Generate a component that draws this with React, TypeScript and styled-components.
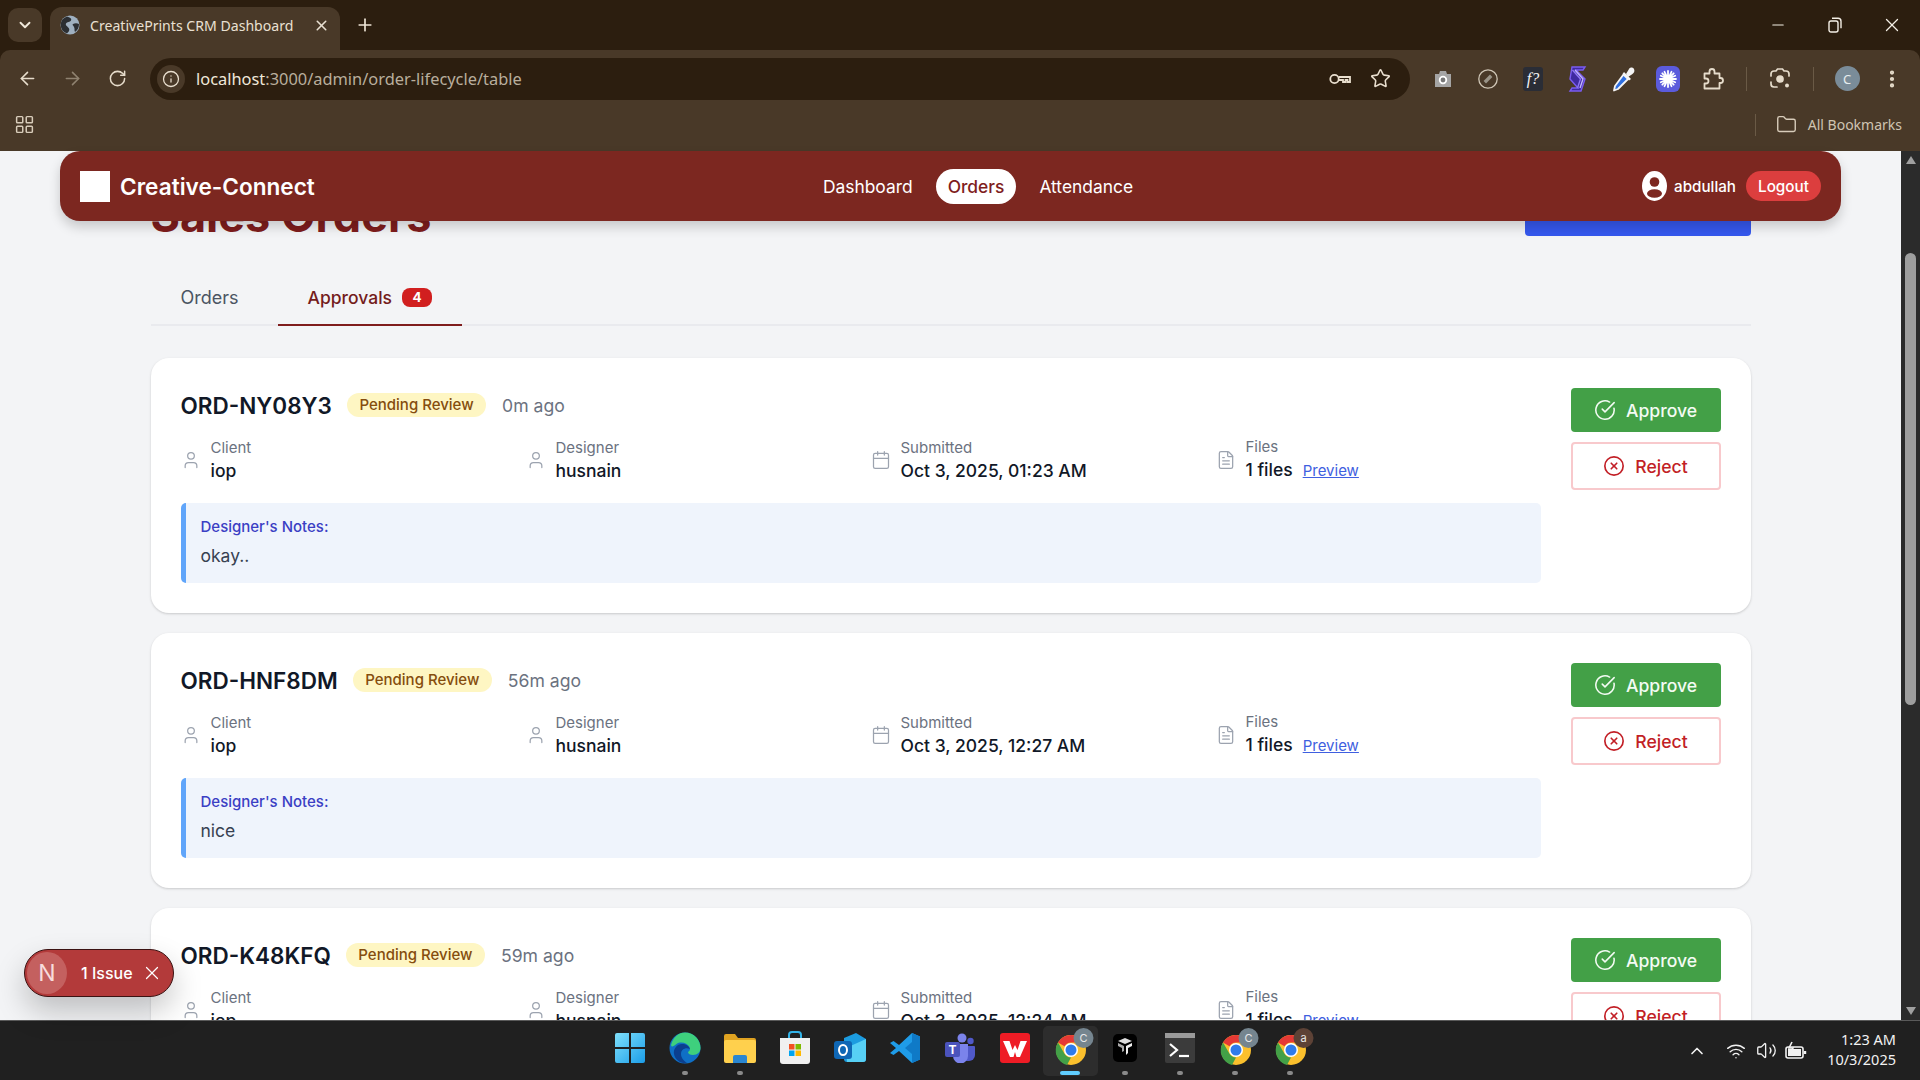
import React from "react";
import styled, { createGlobalStyle } from "styled-components";
import {
  ArrowLeft, ArrowRight, Calendar, ChevronDown, ChevronUp, CircleCheckBig, CircleX, EllipsisVertical,
  FileText, Folder, Info, LayoutGrid, Minus, Plus, RotateCw, Star, User, Volume2, Wifi, X,
} from "lucide-react";

const GlobalStyle = createGlobalStyle`
  html, body { margin: 0; padding: 0; overflow: hidden; background: #202020; }
  * { box-sizing: border-box; }
`;

const Screen = styled.div`
  width: 1920px; height: 1080px; display: flex; flex-direction: column; overflow: hidden;
  font-family: Inter, "Liberation Sans", sans-serif;
`;

/* ---------- browser chrome ---------- */
const BrowserFrame = styled.div`
  height: 151px; flex: none; background: #2c1e0f; display: flex; flex-direction: column;
  font-family: "Noto Sans", "Open Sans", sans-serif; color: #e9dfcf;
`;
const TabStrip = styled.div` height: 50px; display: flex; align-items: flex-end; flex: none; `;
const TabSwitcher = styled.div`
  width: 34px; height: 34px; margin: 0 8px 8px 8px; border-radius: 10px; background: #493928;
  display: flex; align-items: center; justify-content: center; color: #f0e8da;
`;
const ActiveTab = styled.div`
  width: 290px; height: 43px; background: #493928; border-radius: 12px 12px 0 0; display: flex; align-items: center;
  padding: 0 10px 7px; gap: 10px; font-size: 14.1px; color: #e9e0d2;
`;
const TabTitle = styled.span` flex: 1; white-space: nowrap; `;
const NewTab = styled.div` width: 50px; height: 50px; display: flex; align-items: center; justify-content: center; color: #eee5d6; `;
const WindowControls = styled.div` margin-left: auto; display: flex; align-self: stretch; `;
const WindowButton = styled.div` width: 57px; display: flex; align-items: center; justify-content: center; color: #f4efe6; `;
const ToolbarArea = styled.div` flex: 1; background: #493928; border-radius: 10px 10px 0 0; display: flex; flex-direction: column; `;
const Toolbar = styled.div` height: 50px; display: flex; align-items: center; padding: 7px 0 0 4.5px; `;
const Slot = styled.div<{ $dim?: boolean }>`
  width: 45px; height: 42px; flex: none; display: flex; align-items: center; justify-content: center;
  color: ${(p) => (p.$dim ? "#8f8270" : "#e6dccb")};
`;
const AddressBar = styled.div`
  width: 1260px; height: 42px; margin: 0 10.5px; flex: none; border-radius: 21px; background: #2c1e0f; display: flex; align-items: center; padding: 0 10px 0 7px;
`;
const InfoChip = styled.div`
  width: 28px; height: 28px; flex: none; border-radius: 50%; background: #493928; display: flex; align-items: center; justify-content: center; color: #e9dfcf;
`;
const Url = styled.div` margin-left: 11px; font-size: 16.4px; color: #b9ae9d; white-space: nowrap; flex: 1; `;
const UrlHost = styled.span` color: #f0e8da; `;
const UrlAction = styled.div` width: 40px; display: flex; align-items: center; justify-content: center; color: #e9dfcf; `;
const ToolDivider = styled.div` width: 1px; height: 24px; margin: 0 10.5px; background: #6a5a46; flex: none; `;
const Avatar = styled.div`
  width: 25px; height: 25px; border-radius: 50%; background: #7a8c99; color: #e6ecef; font-size: 13px; display: flex; align-items: center; justify-content: center;
`;
const FBadge = styled.div`
  width: 20px; height: 24px; border-radius: 3px; background: #2a2d36; color: #f4f4f4; font: italic 400 16px "Liberation Serif", serif; display: flex; align-items: center; justify-content: center;
`;
const BookmarksBar = styled.div` height: 51px; margin-top: -1px; display: flex; align-items: center; padding: 0 18px 0 14px; color: #d8ccba; `;
const BookmarkDivider = styled.div` width: 1px; height: 22px; background: #6a5a46; margin-left: auto; margin-right: 20px; `;
const BookmarkLabel = styled.span` margin-left: 11px; font-size: 14px; color: #cfc4b2; white-space: nowrap; `;

/* ---------- page ---------- */
const Viewport = styled.div` flex: 1; min-height: 0; display: flex; position: relative; background: #f3f4f6; `;
const PageArea = styled.main` flex: 1; min-width: 0; overflow: hidden; padding: 37px 150.5px 0; `;
const TitleRow = styled.div` height: 48px; display: flex; justify-content: space-between; align-items: flex-start; margin-bottom: 30px; `;
const PageTitle = styled.h1` margin: 0; font-size: 45px; line-height: 56px; font-weight: 700; color: #7f1d1d; white-space: nowrap; `;
const NewOrderButton = styled.div` width: 226px; height: 48px; border-radius: 4px; background: #3558ee; `;
const Tabs = styled.div` display: flex; gap: 9px; height: 60px; border-bottom: 2px solid #e9eaee; margin-bottom: 32px; `;
const TabItem = styled.div<{ $active?: boolean }>`
  height: 60px; padding: 19px 30px 0; line-height: 26px; display: flex; align-items: flex-start; gap: 10px; white-space: nowrap;
  font-size: ${(p) => (p.$active ? "17.5px" : "18px")};
  color: ${(p) => (p.$active ? "#741c1c" : "#4b5563")};
  font-weight: ${(p) => (p.$active ? 500 : 400)};
  border-bottom: 2px solid ${(p) => (p.$active ? "#7f1d1d" : "transparent")};
`;
const CountBadge = styled.span`
  width: 30px; height: 19px; margin-top: 3px; border-radius: 8px; background: #d11f1f; color: #fff; font-size: 13.5px; line-height: 19px; font-weight: 700; text-align: center;
`;
const CardList = styled.div` display: flex; flex-direction: column; gap: 20px; `;
const Card = styled.article`
  display: flex; gap: 30px; padding: 30px; background: #fff; border-radius: 18px; flex: none;
  box-shadow: 0 1px 3px rgba(0, 0, 0, 0.12), 0 1px 2px rgba(0, 0, 0, 0.06);
`;
const CardBody = styled.div` flex: 1; min-width: 0; `;
const CardHead = styled.div` height: 34px; display: flex; align-items: center; `;
const OrderId = styled.span` font-size: 22.5px; font-weight: 600; color: #111827; white-space: nowrap; `;
const StatusBadge = styled.span`
  margin-left: 15px; height: 24px; padding: 0 12.5px; border-radius: 12px; background: #fef6c3; color: #854d0e; font-size: 15px; font-weight: 500; line-height: 24px; white-space: nowrap;
`;
const TimeAgo = styled.span` margin-left: 16px; font-size: 17.6px; color: #6b7280; white-space: nowrap; `;
const InfoGrid = styled.div` display: grid; grid-template-columns: repeat(4, 345px); margin-top: 14px; `;
const InfoItem = styled.div` display: flex; align-items: center; gap: 10px; color: #9ca3af; `;
const InfoText = styled.div` display: flex; flex-direction: column; `;
const InfoLabel = styled.span` font-size: 15px; line-height: 22px; color: #6b7280; `;
const InfoValue = styled.span` font-size: 17.5px; line-height: 24px; font-weight: 500; color: #111827; white-space: nowrap; `;
const PreviewLink = styled.a` margin-left: 10px; font-size: 15px; font-weight: 400; color: #3f5fe0; text-decoration: underline; `;
const Notes = styled.div`
  margin-top: 20px; height: 80px; padding: 14px 20px 0 15px; background: #eff4fc; border-left: 5px solid #60a5fa; border-radius: 5px;
`;
const NotesTitle = styled.div` font-size: 15px; line-height: 20px; font-weight: 500; color: #3b3fc4; `;
const NotesText = styled.div` margin-top: 5px; font-size: 17.5px; line-height: 28px; color: #374151; `;
const Actions = styled.div` width: 150px; flex: none; display: flex; flex-direction: column; gap: 10px; `;
const ActionButton = styled.button<{ $reject?: boolean }>`
  height: ${(p) => (p.$reject ? "48px" : "44px")}; border-radius: 4px; display: flex; align-items: center; justify-content: center; gap: 10px;
  font: 500 17.6px Inter, sans-serif; cursor: pointer; padding: 0;
  color: ${(p) => (p.$reject ? "#c21f26" : "#f3fbf3")};
  background: ${(p) => (p.$reject ? "#fff" : "#43a047")};
  border: ${(p) => (p.$reject ? "2px solid #f8c9cc" : "none")};
`;

/* overlays */
const AppHeader = styled.header`
  position: absolute; top: 0; left: 60px; width: 1781px; height: 70px; padding: 0 20px; border-radius: 20px;
  background: #7c2720; color: #fff; display: grid; grid-template-columns: 1fr auto 1fr; align-items: center;
  box-shadow: 0 6px 12px rgba(0, 0, 0, 0.18);
`;
const Brand = styled.div` display: flex; align-items: center; gap: 10px; font-size: 22.6px; font-weight: 600; white-space: nowrap; `;
const BrandMark = styled.div` width: 30px; height: 31px; background: #fff; `;
const NavLinks = styled.nav` display: flex; align-items: center; gap: 11px; margin-left: 55px; `;
const NavLink = styled.a<{ $active?: boolean }>`
  height: 35px; padding: 0 12px; border-radius: 18px; display: flex; align-items: center; font-size: 17.4px; white-space: nowrap;
  font-weight: ${(p) => (p.$active ? 500 : 400)};
  color: ${(p) => (p.$active ? "#7f1d1d" : "#fff")};
  background: ${(p) => (p.$active ? "#fff" : "transparent")};
`;
const UserBox = styled.div` justify-self: end; display: flex; align-items: center; font-size: 15.2px; font-weight: 500; `;
const UserName = styled.span` margin: 0 10px 0 7px; `;
const LogoutButton = styled.div`
  width: 75px; height: 30px; border-radius: 15px; background: #dc3e3e; color: #fff; font-size: 15.3px; font-weight: 500; display: flex; align-items: center; justify-content: center;
`;
const IssueToast = styled.div`
  position: absolute; left: 24px; top: 798px; width: 150px; height: 48px; border-radius: 24px; background: #b33a3a; border: 1.5px solid #3b1212; color: #fff;
  display: flex; align-items: center; padding-left: 2px; font-size: 16px; font-weight: 500;
  box-shadow: 0 14px 30px rgba(0, 0, 0, 0.22);
`;
const IssueLogo = styled.div`
  width: 40px; height: 42px; border-radius: 50%; background: #c4605f; display: flex; align-items: center; justify-content: center; font-size: 23px; font-weight: 400; color: #f7dcdc;
`;
const IssueText = styled.span` margin: 0 8px 0 14px; white-space: nowrap; `;
const ScrollTrack = styled.div` width: 19px; flex: none; background: #2b2b2b; display: flex; flex-direction: column; align-items: center; justify-content: space-between; padding: 5px 0; position: relative; `;
const ScrollThumb = styled.div` position: absolute; top: 102px; left: 4px; width: 11px; height: 452px; border-radius: 6px; background: #9e9e9e; `;
const ScrollArrow = styled.div<{ $down?: boolean }>`
  width: 0; height: 0; border-left: 5.5px solid transparent; border-right: 5.5px solid transparent;
  ${(p) => (p.$down ? "border-top: 8px solid #a0a0a0;" : "border-bottom: 8px solid #a0a0a0;")}
`;

/* ---------- taskbar ---------- */
const Taskbar = styled.footer`
  height: 60px; flex: none; background: #202020; border-top: 1px solid #5a5a5a; display: grid; grid-template-columns: 1fr auto 1fr; align-items: center;
  font-family: "Noto Sans", "Open Sans", sans-serif; color: #f2f2f2;
`;
const TaskIcons = styled.div` grid-column: 2; display: flex; `;
const TaskSlot = styled.div<{ $active?: boolean }>`
  width: 55px; height: 50px; position: relative; display: flex; align-items: center; justify-content: center; border-radius: 5px; padding-bottom: 6px;
  background: ${(p) => (p.$active ? "#2d2d2d" : "transparent")};
`;
const TaskDot = styled.span<{ $active?: boolean }>`
  position: absolute; bottom: 1px; left: 50%; transform: translateX(-50%); height: 3.5px; border-radius: 2px;
  width: ${(p) => (p.$active ? "20px" : "6px")};
  background: ${(p) => (p.$active ? "#60cdff" : "#8a8a8a")};
`;
const Tray = styled.div` justify-self: end; display: flex; align-items: center; padding-right: 24px; `;
const TraySlot = styled.div` width: 30px; display: flex; justify-content: center; `;
const TrayChevron = styled.div` width: 24px; margin-right: 12px; display: flex; justify-content: center; `;
const Clock = styled.div` margin-left: 16px; padding-bottom: 4px; text-align: right; font-size: 14.5px; line-height: 20px; white-space: nowrap; `;

/* ---------- drawings ---------- */
const GlobeIcon = () => (
  <svg width="20" height="20" viewBox="0 0 20 20">
    <circle cx="10" cy="10" r="9.5" fill="#9fb0c0" />
    <path d="M7 1.5c3 1 5 2 4 4s-4 1-5 3 2 3 3 5-1 4-2 5C3 17 .8 14 .8 10 .8 6 3 3 7 1.5zM13 9c2-1 4-1 6 0 0 3-1 6-4 8-1-2 0-3-1-5s-2-2-1-3z" fill="#2c2f33" />
  </svg>
);
const KeyIcon = () => (
  <svg width="24" height="24" viewBox="0 0 24 24" fill="none" stroke="currentColor" strokeWidth="1.8">
    <circle cx="6.5" cy="12" r="4.2" />
    <path d="M10.7 10h11.3v5h-2.5v-2h-2v2h-2.5v-2h-4.3" />
  </svg>
);
const RestoreIcon = () => (
  <svg width="14" height="16" viewBox="0 0 14 16" fill="none" stroke="currentColor" strokeWidth="1.4">
    <rect x="1" y="4" width="9" height="11" rx="2" />
    <path d="M4 1.2h6a3 3 0 0 1 3 3v7" />
  </svg>
);
const CameraExt = () => (
  <svg width="20" height="20" viewBox="0 0 20 20">
    <path d="M2 5h4l1-3h6l1 3h4v13H2z" fill="#a5a5a5" />
    <circle cx="10" cy="11" r="4.2" fill="#fff" />
    <circle cx="10" cy="11" r="2.4" fill="#777" />
  </svg>
);
const CompassExt = () => (
  <svg width="22" height="22" viewBox="0 0 22 22" fill="none">
    <circle cx="11" cy="11" r="9.2" stroke="#cfc6b6" strokeWidth="1.3" />
    <path d="M7.8 14.2l6.4-6.4" stroke="#9a9488" strokeWidth="3.4" />
  </svg>
);
const SwirlExt = () => (
  <svg width="20" height="26" viewBox="0 0 20 26" fill="none" strokeWidth="1.4">
    <path d="M4 1h13l-2 3H8l9 9-4 12H2l2-3h6l-8-9z" fill="#3f2aa0" stroke="#7a5cf0" />
    <path d="M7 4l8 9-3 9" stroke="#c2b4fa" />
    <path d="M4.500 4l8 9-3 9" stroke="#8f78f4" />
  </svg>
);
const DropperExt = () => (
  <svg width="24" height="26" viewBox="0 0 24 26">
    <path d="M15 8l3-5c1-2 4-2 5 0s0 4-1.500 5L17 11z" fill="#f4f4f4" />
    <path d="M13 6l7 7-2 1.500-6.500-6.500z" fill="#f4f4f4" />
    <path d="M12.500 8.500l4.500 4.500L7 23l-4 1.500L4 20z" fill="#2f6fe0" stroke="#f4f4f4" strokeWidth="1.800" strokeLinejoin="round" />
  </svg>
);
const SunExt = () => (
  <svg width="24" height="26" viewBox="0 0 24 26">
    <rect width="24" height="26" rx="6" fill="#5b5bdc" />
    <g stroke="#fff" strokeWidth="1.8" strokeLinecap="round">
      <path d="M12 5v16M4 13h16M6.3 7.3l11.4 11.4M17.7 7.3L6.3 18.7M8.5 5.8l7 14.4M15.5 5.8l-7 14.4M4.8 9.8l14.4 6.4M19.2 9.8L4.8 16.2" />
    </g>
    <circle cx="12" cy="13" r="3.4" fill="#fff" />
  </svg>
);
const PuzzleIcon = () => (
  <svg width="24" height="24" viewBox="0 0 24 24" fill="none" stroke="currentColor" strokeWidth="1.8" strokeLinejoin="round">
    <path d="M3.500 6.500h5V4.500a2.500 2.500 0 0 1 5 0v2h5v4.500h1a2.500 2.500 0 0 1 0 5h-1v5.500h-15v-5h1.500a2.500 2.500 0 0 0 0-5H3.500z" />
  </svg>
);
const LensIcon = () => (
  <svg width="22" height="22" viewBox="0 0 22 22" fill="none" stroke="currentColor" strokeWidth="1.7" strokeLinecap="round">
    <path d="M2 8V6a3 3 0 0 1 3-3h2l1.5-2h5L15 3h2a3 3 0 0 1 3 3v2M2 14v2a3 3 0 0 0 3 3h3M20 13" />
    <circle cx="11" cy="11" r="3" fill="currentColor" />
    <circle cx="18" cy="17.5" r="2" fill="currentColor" stroke="none" />
  </svg>
);
const HeaderUser = () => (
  <svg width="25" height="30" viewBox="0 0 25 30">
    <ellipse cx="12.5" cy="15" rx="12.5" ry="15" fill="#fff" />
    <circle cx="12.5" cy="11" r="4.8" fill="#7c2720" />
    <ellipse cx="12.5" cy="22.5" rx="7.5" ry="4.3" fill="#7c2720" />
  </svg>
);
const WindowsLogo = () => (
  <svg width="30" height="30" viewBox="0 0 30 30">
    <defs>
      <linearGradient id="wg" x1="0" y1="0" x2="1" y2="1"><stop offset="0" stopColor="#7fe0fb" /><stop offset="1" stopColor="#1b9de8" /></linearGradient>
    </defs>
    <path d="M0 2a2 2 0 0 1 2-2h12v14H0zM16 0h12a2 2 0 0 1 2 2v12H16zM0 16h14v14H2a2 2 0 0 1-2-2zM16 16h14v12a2 2 0 0 1-2 2H16z" fill="url(#wg)" />
  </svg>
);
const EdgeLogo = () => (
  <svg width="32" height="32" viewBox="0 0 32 32">
    <circle cx="16" cy="16" r="15.5" fill="#0f6fc6" />
    <path d="M2 13C4 5 10 .5 16 .5 25 .5 31.5 8 31.5 16c0 4-3 7-7.5 7-3 0-5-1-5-3 2-1 2.5-3 1.5-5-2-4-9-6-13-3-3 2-4.500 4-5.500 1z" fill="#3ed07d" />
    <path d="M18 31c-6 1-12-3-13-9-1-5 3-10 8-10 4 0 7 2 8 5-4-2-9 0-9 5 0 4 3 7 6 9z" fill="#0b3f8f" />
  </svg>
);
const ExplorerLogo = () => (
  <svg width="32" height="30" viewBox="0 0 32 30">
    <path d="M0 3a2 2 0 0 1 2-2h9l3 4h16a2 2 0 0 1 2 2v4H0z" fill="#e0a321" />
    <rect y="7" width="32" height="23" rx="2" fill="#ffd04d" />
    <path d="M9 30v-6a2 2 0 0 1 2-2h10a2 2 0 0 1 2 2v6z" fill="#2a86d0" />
  </svg>
);
const StoreLogo = () => (
  <svg width="30" height="34" viewBox="0 0 30 34">
    <path d="M9 8V4a3 3 0 0 1 3-3h6a3 3 0 0 1 3 3v4" fill="none" stroke="#32b3e8" strokeWidth="2" />
    <path d="M0 7h30v23a3 3 0 0 1-3 3H3a3 3 0 0 1-3-3z" fill="#f0f0f0" />
    <rect x="9" y="13" width="5.500" height="5.500" fill="#f25022" /><rect x="15.500" y="13" width="5.500" height="5.500" fill="#7fba00" />
    <rect x="9" y="19.500" width="5.500" height="5.500" fill="#00a4ef" /><rect x="15.500" y="19.500" width="5.500" height="5.500" fill="#ffb900" />
  </svg>
);
const OutlookLogo = () => (
  <svg width="32" height="30" viewBox="0 0 32 30">
    <path d="M10 5L22 0l10 6v20a3 3 0 0 1-3 3H13a3 3 0 0 1-3-3z" fill="#1c9ce0" />
    <path d="M12 15l20-9v20a3 3 0 0 1-3 3H13z" fill="#57d0f5" />
    <rect y="8" width="18" height="18" rx="3" fill="#0f67b5" />
    <ellipse cx="9" cy="17" rx="4" ry="5" fill="none" stroke="#fff" strokeWidth="2" />
  </svg>
);
const VsCodeLogo = () => (
  <svg width="30" height="30" viewBox="0 0 30 30">
    <path d="M22 0l8 3.500v23L22 30 9 18l-5.500 4L0 20l6-5-6-5 3.500-2L9 12z" fill="#1f9ce8" />
    <path d="M22 0l8 3.500v23L22 30V21l-7-6 7-6z" fill="#0f7ac7" />
  </svg>
);
const TeamsLogo = () => (
  <svg width="30" height="30" viewBox="0 0 30 30">
    <circle cx="17" cy="5" r="4.500" fill="#7b83eb" />
    <circle cx="25.500" cy="8" r="3.200" fill="#5059c9" />
    <path d="M20 13h9a1 1 0 0 1 1 1v8a6 6 0 0 1-6 6h-4z" fill="#5059c9" />
    <path d="M8 11h15v12a7 7 0 0 1-15 0z" fill="#7b83eb" />
    <rect y="9" width="15" height="15" rx="2" fill="#4b53bc" />
    <text x="7.500" y="20.500" textAnchor="middle" fill="#fff" fontSize="12" fontWeight="700" fontFamily="Inter, sans-serif">T</text>
  </svg>
);
const WpsLogo = () => (
  <svg width="30" height="30" viewBox="0 0 30 30">
    <rect width="30" height="30" rx="3" fill="#ee1c25" />
    <path d="M3 8h6.500l3 9 2.500-5 2.500 5 3-9H27l-7 16h-3.500L15 19l-1.500 5H10z" fill="#fff" />
  </svg>
);
const AppCube = () => (
  <svg width="24" height="28" viewBox="0 0 24 28">
    <rect width="24" height="28" rx="5" fill="#000" />
    <path d="M5 7l7-3 7 3-7 3z" fill="#ddd" /><path d="M5 9l6 3v5l-2 1v-4l-4-2z" fill="#aaa" /><path d="M19 9l-6 3v9l2-2v-5l4-2z" fill="#f0f0f0" />
  </svg>
);
const TerminalLogo = () => (
  <svg width="30" height="30" viewBox="0 0 30 30">
    <rect width="30" height="30" rx="2" fill="#3b3b3b" />
    <rect width="30" height="5" fill="#9a9a9a" />
    <path d="M5 11l7 6-7 6" fill="none" stroke="#fff" strokeWidth="2.200" />
    <path d="M14 23h10" stroke="#fff" strokeWidth="2.200" />
  </svg>
);
const ChromeLogo = ({ letter, tint }: { letter: string; tint: string }) => (
  <svg width="50" height="40" viewBox="-10 0 50 40">
    <g transform="translate(1 7)">
      <circle cx="15" cy="15" r="15" fill="#fbc02d" />
      <path d="M15 0a15 15 0 0 1 13 7.500H15a7.500 7.500 0 0 0-6.500 3.800L2 7.500A15 15 0 0 1 15 0z" fill="#e53935" />
      <path d="M2 7.500l6.500 11.300A7.500 7.500 0 0 0 15 22.500L11 30A15 15 0 0 1 2 7.500z" fill="#43a047" />
      <circle cx="15" cy="15" r="7" fill="#fff" />
      <circle cx="15" cy="15" r="5.500" fill="#2f7bea" />
    </g>
    <circle cx="28.500" cy="10" r="10" fill={tint} />
    <text x="28.500" y="14" textAnchor="middle" fill="#e8e8e8" fontSize="11" fontFamily="Inter, sans-serif">{letter}</text>
  </svg>
);

const TASK_APPS = [
  { key: "win", node: <WindowsLogo />, dot: false },
  { key: "edge", node: <EdgeLogo />, dot: true },
  { key: "files", node: <ExplorerLogo />, dot: true },
  { key: "store", node: <StoreLogo />, dot: false },
  { key: "outlook", node: <OutlookLogo />, dot: false },
  { key: "code", node: <VsCodeLogo />, dot: false },
  { key: "teams", node: <TeamsLogo />, dot: false },
  { key: "wps", node: <WpsLogo />, dot: false },
  { key: "chrome1", node: <ChromeLogo letter="C" tint="#75858f" />, dot: true, active: true },
  { key: "cube", node: <AppCube />, dot: true },
  { key: "term", node: <TerminalLogo />, dot: true },
  { key: "chrome2", node: <ChromeLogo letter="C" tint="#75858f" />, dot: true },
  { key: "chrome3", node: <ChromeLogo letter="a" tint="#5d4236" />, dot: true },
];

const ORDERS = [
  { id: "ORD-NY08Y3", ago: "0m ago", submitted: "Oct 3, 2025, 01:23 AM", note: "okay.." },
  { id: "ORD-HNF8DM", ago: "56m ago", submitted: "Oct 3, 2025, 12:27 AM", note: "nice" },
  { id: "ORD-K48KFQ", ago: "59m ago", submitted: "Oct 3, 2025, 12:24 AM", note: "" },
];

type Order = (typeof ORDERS)[number];

const OrderCard = ({ order }: { order: Order }) => (
  <Card>
    <CardBody>
      <CardHead>
        <OrderId>{order.id}</OrderId>
        <StatusBadge>Pending Review</StatusBadge>
        <TimeAgo>{order.ago}</TimeAgo>
      </CardHead>
      <InfoGrid>
        <InfoItem>
          <User size={20} strokeWidth={1.5} />
          <InfoText><InfoLabel>Client</InfoLabel><InfoValue>iop</InfoValue></InfoText>
        </InfoItem>
        <InfoItem>
          <User size={20} strokeWidth={1.5} />
          <InfoText><InfoLabel>Designer</InfoLabel><InfoValue>husnain</InfoValue></InfoText>
        </InfoItem>
        <InfoItem>
          <Calendar size={20} strokeWidth={1.5} />
          <InfoText><InfoLabel>Submitted</InfoLabel><InfoValue>{order.submitted}</InfoValue></InfoText>
        </InfoItem>
        <InfoItem>
          <FileText size={20} strokeWidth={1.5} />
          <InfoText>
            <InfoLabel>Files</InfoLabel>
            <InfoValue>1 files<PreviewLink>Preview</PreviewLink></InfoValue>
          </InfoText>
        </InfoItem>
      </InfoGrid>
      {order.note && (
        <Notes>
          <NotesTitle>Designer's Notes:</NotesTitle>
          <NotesText>{order.note}</NotesText>
        </Notes>
      )}
    </CardBody>
    <Actions>
      <ActionButton><CircleCheckBig size={22} strokeWidth={1.7} />Approve</ActionButton>
      <ActionButton $reject><CircleX size={22} strokeWidth={1.8} />Reject</ActionButton>
    </Actions>
  </Card>
);

export default function App() {
  return (
    <Screen>
      <GlobalStyle />
      <BrowserFrame>
        <TabStrip>
          <TabSwitcher><ChevronDown size={18} strokeWidth={2.5} /></TabSwitcher>
          <ActiveTab>
            <GlobeIcon />
            <TabTitle>CreativePrints CRM Dashboard</TabTitle>
            <X size={17} strokeWidth={2.2} />
          </ActiveTab>
          <NewTab><Plus size={20} strokeWidth={2} /></NewTab>
          <WindowControls>
            <WindowButton><Minus size={18} strokeWidth={1.4} /></WindowButton>
            <WindowButton><RestoreIcon /></WindowButton>
            <WindowButton><X size={22} strokeWidth={1.4} /></WindowButton>
          </WindowControls>
        </TabStrip>
        <ToolbarArea>
          <Toolbar>
            <Slot><ArrowLeft size={21} strokeWidth={1.8} /></Slot>
            <Slot $dim><ArrowRight size={21} strokeWidth={1.8} /></Slot>
            <Slot><RotateCw size={19} strokeWidth={1.9} /></Slot>
            <AddressBar>
              <InfoChip><Info size={18} strokeWidth={1.7} /></InfoChip>
              <Url><UrlHost>localhost</UrlHost>:3000/admin/order-lifecycle/table</Url>
              <UrlAction><KeyIcon /></UrlAction>
              <UrlAction><Star size={21} strokeWidth={1.8} /></UrlAction>
            </AddressBar>
            <Slot><CameraExt /></Slot>
            <Slot><CompassExt /></Slot>
            <Slot><FBadge>f?</FBadge></Slot>
            <Slot><SwirlExt /></Slot>
            <Slot><DropperExt /></Slot>
            <Slot><SunExt /></Slot>
            <Slot><PuzzleIcon /></Slot>
            <ToolDivider />
            <Slot><LensIcon /></Slot>
            <ToolDivider />
            <Slot><Avatar>C</Avatar></Slot>
            <Slot><EllipsisVertical size={22} strokeWidth={2.6} /></Slot>
          </Toolbar>
          <BookmarksBar>
            <LayoutGrid size={21} strokeWidth={1.7} />
            <BookmarkDivider />
            <Folder size={21} strokeWidth={1.6} />
            <BookmarkLabel>All Bookmarks</BookmarkLabel>
          </BookmarksBar>
        </ToolbarArea>
      </BrowserFrame>

      <Viewport>
        <PageArea>
          <TitleRow>
            <PageTitle>Sales Orders</PageTitle>
            <NewOrderButton />
          </TitleRow>
          <Tabs>
            <TabItem>Orders</TabItem>
            <TabItem $active>Approvals<CountBadge>4</CountBadge></TabItem>
          </Tabs>
          <CardList>
            {ORDERS.map((o) => <OrderCard key={o.id} order={o} />)}
          </CardList>
        </PageArea>
        <ScrollTrack>
          <ScrollArrow />
          <ScrollThumb />
          <ScrollArrow $down />
        </ScrollTrack>
        <AppHeader>
          <Brand><BrandMark />Creative-Connect</Brand>
          <NavLinks>
            <NavLink>Dashboard</NavLink>
            <NavLink $active>Orders</NavLink>
            <NavLink>Attendance</NavLink>
          </NavLinks>
          <UserBox>
            <HeaderUser />
            <UserName>abdullah</UserName>
            <LogoutButton>Logout</LogoutButton>
          </UserBox>
        </AppHeader>
        <IssueToast>
          <IssueLogo>N</IssueLogo>
          <IssueText>1 Issue</IssueText>
          <X size={22} strokeWidth={1.3} />
        </IssueToast>
      </Viewport>

      <Taskbar>
        <TaskIcons>
          {TASK_APPS.map((a) => (
            <TaskSlot key={a.key} $active={a.active}>
              {a.node}
              {a.dot && <TaskDot $active={a.active} />}
            </TaskSlot>
          ))}
        </TaskIcons>
        <Tray>
          <TrayChevron><ChevronUp size={20} strokeWidth={2} /></TrayChevron>
          <TraySlot><Wifi size={20} strokeWidth={1.7} /></TraySlot>
          <TraySlot><Volume2 size={21} strokeWidth={1.5} /></TraySlot>
          <TraySlot>
            <svg width="22" height="20" viewBox="0 0 22 20" fill="none" stroke="currentColor" strokeWidth="1.6">
              <rect x="1" y="6" width="17" height="11" rx="2" />
              <rect x="3" y="8" width="13" height="7" fill="currentColor" stroke="none" />
              <path d="M20 10v3" strokeWidth="2.4" />
              <path d="M7 1L4 7h4l-2 5" strokeWidth="1.6" />
            </svg>
          </TraySlot>
          <Clock>1:23 AM<br />10/3/2025</Clock>
        </Tray>
      </Taskbar>
    </Screen>
  );
}
